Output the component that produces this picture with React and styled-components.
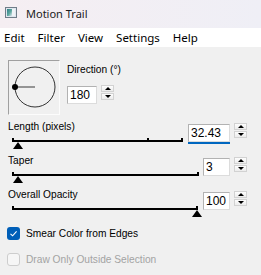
import React from 'react';
import styled, { createGlobalStyle } from 'styled-components';

const Global = createGlobalStyle`
  html, body { margin: 0; padding: 0; background: #f0f0f0; }
  * { box-sizing: border-box; }
`;

const Window = styled.div`
  width: 261px;
  height: 275px;
  overflow: hidden;
  background: #f0f0f0;
  font-family: "Liberation Sans", Arial, sans-serif;
  font-size: 10.2px;
  color: #000;
`;

const TitleBar = styled.div`
  height: 28px;
  display: flex;
  align-items: flex-start;
  gap: 9px;
  padding-left: 5px;
  background: linear-gradient(90deg, #f5eef2, #efeff6);
  font-family: "Noto Sans", sans-serif;
  font-size: 11px;
  line-height: 28px;
  color: #1b1b1b;
`;

const AppIcon = styled.svg`
  margin-top: 7px;
  flex: none;
`;

const MenuBar = styled.div`
  height: 19px;
  display: flex;
  gap: 13px;
  padding-left: 4px;
  background: #fff;
  font-family: "Noto Sans", sans-serif;
  font-size: 11.5px;
  line-height: 19px;
  color: #000;
`;

const MenuItem = styled.span``;

const Body = styled.div`
  padding: 13px 14px 0 8px;
`;

const DirectionRow = styled.div`
  display: flex;
  gap: 7px;
  height: 55px;
  margin-bottom: 6px;
`;

const DirBox = styled.div`
  width: 52px;
  height: 55px;
  border-top: 1px solid #a0a0a0;
  border-left: 1px solid #a0a0a0;
  border-right: 1px solid #fcfcfc;
  border-bottom: 1px solid #fcfcfc;
`;

const DirRight = styled.div`
  display: flex;
  flex-direction: column;
  padding-top: 4px;
  gap: 10px;
`;

const Label = styled.div`
  line-height: 12px;
  height: 12px;
  white-space: nowrap;
  color: ${(p) => (p.$disabled ? '#a3a3a3' : '#000')};
`;

const InputGroup = styled.div`
  display: flex;
  gap: 4px;
  align-items: flex-start;
  margin-top: ${(p) => p.$top || 0}px;
`;

const NumField = styled.input`
  width: ${(p) => p.$w}px;
  height: 18px;
  margin: 0;
  padding: 0 0 0 2px;
  border: 1px solid #b2b2b2;
  border-right-color: #dcdcdc;
  border-bottom-color: #dcdcdc;
  background: #fff;
  font-family: "Liberation Sans", Arial, sans-serif;
  font-size: 12px;
  color: #000;
  outline: none;
  box-shadow: ${(p) => (p.$focused ? '0 2px 0 #0067c0' : 'none')};
`;

const Spin = styled.div`
  display: flex;
  flex-direction: column;
  gap: 1px;
  margin-top: -1px;
`;

const SpinBtn = styled.div`
  width: 13px;
  height: 7px;
  border: 1px solid #d2d2d2;
  background: linear-gradient(#fdfdfd, #ececec);
  display: flex;
  align-items: center;
  justify-content: center;
`;

const Arrow = styled.div`
  width: 0;
  height: 0;
  border-left: 3px solid transparent;
  border-right: 3px solid transparent;
  ${(p) =>
    p.$up ? 'border-bottom: 3px solid #000;' : 'border-top: 3px solid #000;'}
`;

const SliderRow = styled.div`
  height: 34px;
  display: flex;
  justify-content: space-between;
  align-items: flex-start;
`;

const SliderCol = styled.div`
  display: flex;
  flex-direction: column;
`;

const Track = styled.div`
  position: relative;
  width: ${(p) => p.$w}px;
  height: 12px;
  margin: 5px 0 0 4px;
  &::before {
    content: '';
    position: absolute;
    left: 0;
    right: 0;
    top: 2px;
    height: 2px;
    background: #000;
  }
`;

const Tick = styled.div`
  position: absolute;
  top: 0;
  left: ${(p) => p.$x}px;
  width: 2px;
  height: 4px;
  background: #000;
`;

const Thumb = styled.div`
  position: absolute;
  top: 4px;
  left: ${(p) => p.$x}px;
  width: 0;
  height: 0;
  border-left: 5.5px solid transparent;
  border-right: 5.5px solid transparent;
  border-bottom: 7px solid #000;
`;

const CheckList = styled.div`
  display: flex;
  flex-direction: column;
  gap: 13px;
  padding-top: 4px;
  margin-left: -1px;
`;

const CheckRow = styled.div`
  display: flex;
  align-items: center;
  gap: 6px;
  height: 13px;
`;

const Box = styled.div`
  width: 13px;
  height: 13px;
  border-radius: 3px;
  display: flex;
  align-items: center;
  justify-content: center;
  ${(p) =>
    p.$checked
      ? 'background: #005fb8;'
      : 'background: #f6f6f6; border: 1px solid #cdcdcd;'}
`;

function SpinButtons() {
  return (
    <Spin>
      <SpinBtn><Arrow $up /></SpinBtn>
      <SpinBtn><Arrow /></SpinBtn>
    </Spin>
  );
}

function Slider({ label, width, ticks, thumb, value, fieldW, focused }) {
  return (
    <SliderRow>
      <SliderCol>
        <Label>{label}</Label>
        <Track $w={width}>
          {ticks.map((t) => (
            <Tick key={t} $x={t} />
          ))}
          <Thumb $x={thumb} />
        </Track>
      </SliderCol>
      <InputGroup $top={3}>
        <NumField $w={fieldW} $focused={focused} defaultValue={value} readOnly />
        <SpinButtons />
      </InputGroup>
    </SliderRow>
  );
}

export default function App() {
  return (
    <>
      <Global />
      <Window>
        <TitleBar>
          <AppIcon width="12" height="11" viewBox="0 0 12 11">
            <defs>
              <linearGradient id="ig" x1="0" x2="1" y1="0" y2="1">
                <stop offset="0" stopColor="#2e7f86" />
                <stop offset="0.55" stopColor="#5fa7a0" />
                <stop offset="1" stopColor="#e3ebf2" />
              </linearGradient>
            </defs>
            <rect x="0.5" y="0.5" width="11" height="10" fill="#dfe6ee" stroke="#6f7c88" />
            <rect x="2" y="2" width="5" height="7" fill="url(#ig)" />
            <rect x="7" y="2" width="3" height="7" fill="#eef2f6" />
          </AppIcon>
          <span>Motion Trail</span>
        </TitleBar>
        <MenuBar>
          <MenuItem>Edit</MenuItem>
          <MenuItem>Filter</MenuItem>
          <MenuItem>View</MenuItem>
          <MenuItem>Settings</MenuItem>
          <MenuItem>Help</MenuItem>
        </MenuBar>
        <Body>
          <DirectionRow>
            <DirBox>
              <svg width="50" height="53" viewBox="0 0 50 53">
                <circle cx="26" cy="26" r="20" fill="none" stroke="#333" strokeWidth="1" />
                <line x1="6" y1="26" x2="26" y2="26" stroke="#7d7d7d" strokeWidth="1.6" />
                <circle cx="6" cy="26" r="3" fill="#000" />
              </svg>
            </DirBox>
            <DirRight>
              <Label>Direction (°)</Label>
              <InputGroup>
                <NumField $w={30} defaultValue="180" readOnly />
                <SpinButtons />
              </InputGroup>
            </DirRight>
          </DirectionRow>
          <Slider label="Length (pixels)" width={170} ticks={[0, 135, 169]} thumb={1} value="32.43" fieldW={42} focused />
          <Slider label="Taper" width={186} ticks={[0, 185]} thumb={1} value="3" fieldW={27} />
          <Slider label="Overall Opacity" width={186} ticks={[0, 184]} thumb={180} value="100" fieldW={27} />
          <CheckList>
            <CheckRow>
              <Box $checked>
                <svg width="9" height="9" viewBox="0 0 9 9">
                  <path d="M1.5 4.8 L3.6 6.8 L7.6 2.3" fill="none" stroke="#fff" strokeWidth="1.1" />
                </svg>
              </Box>
              <Label>Smear Color from Edges</Label>
            </CheckRow>
            <CheckRow>
              <Box />
              <Label $disabled>Draw Only Outside Selection</Label>
            </CheckRow>
          </CheckList>
        </Body>
      </Window>
    </>
  );
}
